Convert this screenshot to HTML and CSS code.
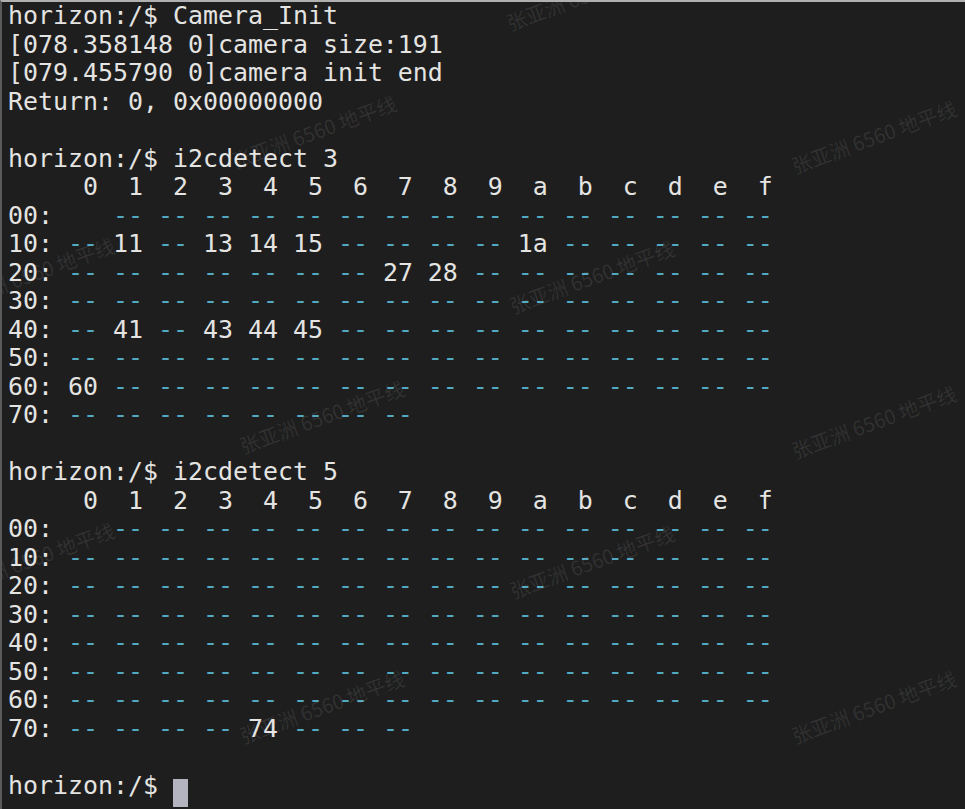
FILE: index.html
```html
<!DOCTYPE html>
<html>
<head>
<meta charset="utf-8">
<link rel="stylesheet" href="styles.css">
</head>
<body>
<div class="term">
<pre class="out">horizon:/$ Camera_Init
[078.358148 0]camera size:191
[079.455790 0]camera init end
Return: 0, 0x00000000

horizon:/$ i2cdetect 3
     0  1  2  3  4  5  6  7  8  9  a  b  c  d  e  f
00:    <span class="d">-- -- -- -- -- -- -- -- -- -- -- -- -- -- --</span>
10: <span class="d">--</span> 11 <span class="d">--</span> 13 14 15 <span class="d">-- -- -- --</span> 1a <span class="d">-- -- -- -- --</span>
20: <span class="d">-- -- -- -- -- -- --</span> 27 28 <span class="d">-- -- -- -- -- -- --</span>
30: <span class="d">-- -- -- -- -- -- -- -- -- -- -- -- -- -- -- --</span>
40: <span class="d">--</span> 41 <span class="d">--</span> 43 44 45 <span class="d">-- -- -- -- -- -- -- -- -- --</span>
50: <span class="d">-- -- -- -- -- -- -- -- -- -- -- -- -- -- -- --</span>
60: 60 <span class="d">-- -- -- -- -- -- -- -- -- -- -- -- -- -- --</span>
70: <span class="d">-- -- -- -- -- -- -- --</span>

horizon:/$ i2cdetect 5
     0  1  2  3  4  5  6  7  8  9  a  b  c  d  e  f
00:    <span class="d">-- -- -- -- -- -- -- -- -- -- -- -- -- -- --</span>
10: <span class="d">-- -- -- -- -- -- -- -- -- -- -- -- -- -- -- --</span>
20: <span class="d">-- -- -- -- -- -- -- -- -- -- -- -- -- -- -- --</span>
30: <span class="d">-- -- -- -- -- -- -- -- -- -- -- -- -- -- -- --</span>
40: <span class="d">-- -- -- -- -- -- -- -- -- -- -- -- -- -- -- --</span>
50: <span class="d">-- -- -- -- -- -- -- -- -- -- -- -- -- -- -- --</span>
60: <span class="d">-- -- -- -- -- -- -- -- -- -- -- -- -- -- -- --</span>
70: <span class="d">-- -- -- --</span> 74 <span class="d">-- -- --</span>

horizon:/$ <span class="cursor"> </span></pre>
<div class="wm" style="left:499px;top:-20px">张亚洲 6560 地平线</div>
<div class="wm" style="left:224px;top:118px">张亚洲 6560 地平线</div>
<div class="wm" style="left:784px;top:123px">张亚洲 6560 地平线</div>
<div class="wm" style="left:-58px;top:260px">张亚洲 6560 地平线</div>
<div class="wm" style="left:502px;top:263px">张亚洲 6560 地平线</div>
<div class="wm" style="left:232px;top:403px">张亚洲 6560 地平线</div>
<div class="wm" style="left:784px;top:408px">张亚洲 6560 地平线</div>
<div class="wm" style="left:-58px;top:545px">张亚洲 6560 地平线</div>
<div class="wm" style="left:502px;top:548px">张亚洲 6560 地平线</div>
<div class="wm" style="left:232px;top:693px">张亚洲 6560 地平线</div>
<div class="wm" style="left:784px;top:693px">张亚洲 6560 地平线</div>
</div>
</body>
</html>
```
FILE: styles.css
```css
html, body {
  margin: 0;
  padding: 0;
  background: #1e1e1e;
}
.term {
  position: relative;
  width: 965px;
  height: 809px;
  overflow: hidden;
  background: #1e1e1e;
  box-sizing: border-box;
  border-top: 2px solid #b0b0b0;
  border-left: 2px solid #5a5a5a;
}
.out {
  margin: 0;
  padding: 0 0 0 6px;
  font-family: "DejaVu Sans Mono", "Liberation Mono", monospace;
  font-size: 24.92px;
  line-height: 28.5px;
  color: #e4e4e2;
  white-space: pre;
}
.d {
  color: #52a9c2;
}
.cursor {
  display: inline-block;
  width: 15px;
  height: 28px;
  background: #b4b4c0;
  vertical-align: -7px;
}
.wm {
  position: absolute;
  width: 176px;
  text-align: center;
  font-family: "Noto Sans CJK SC", "DejaVu Sans", sans-serif;
  font-size: 20px;
  line-height: 24px;
  color: rgba(255, 255, 255, 0.09);
  transform: rotate(-20deg);
  white-space: nowrap;
  pointer-events: none;
}
```
